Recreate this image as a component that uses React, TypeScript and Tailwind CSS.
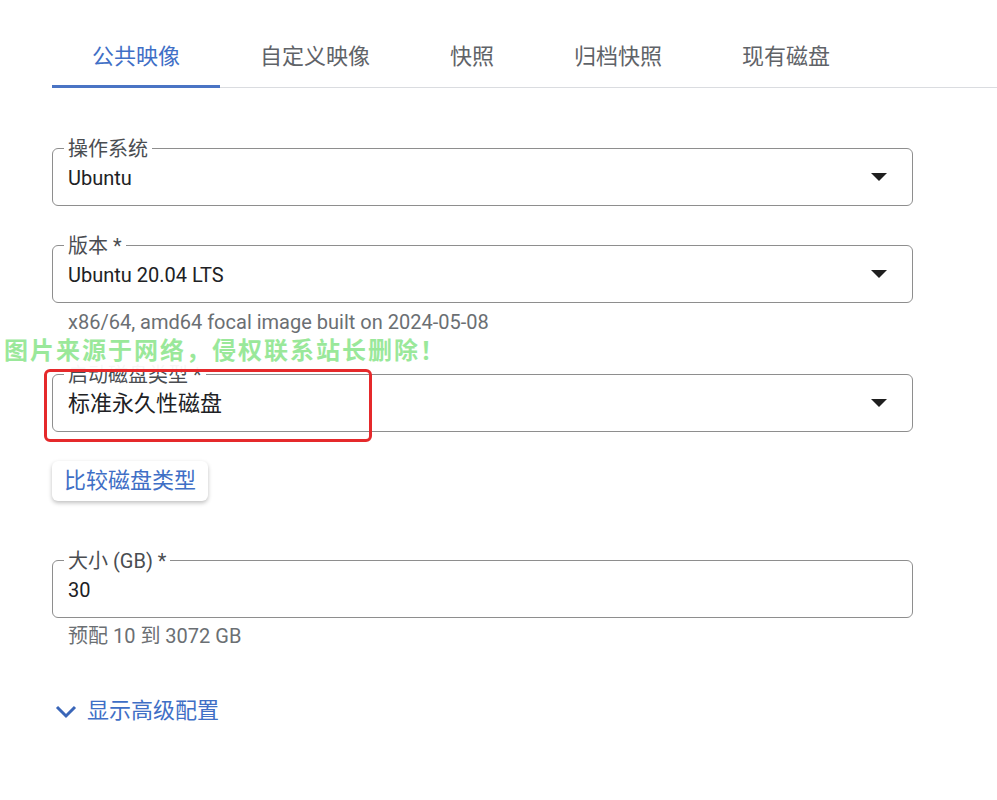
import React from "react";

const Arrow = () => (
  <svg width="16" height="8" viewBox="0 0 16 8" className="shrink-0">
    <path d="M0 0 L16 0 L8 8 Z" fill="#1f1f1f" />
  </svg>
);

function Field({
  label,
  value,
  select,
  big,
  className = "",
}: {
  label: string;
  value: string;
  select?: boolean;
  big?: boolean;
  className?: string;
}) {
  return (
    <div
      className={`relative w-[861px] h-[58px] border border-[#8e8e8e] rounded-[6px] flex items-center justify-between pl-[15px] pr-[25px] ${className}`}
    >
      <span className="absolute left-[11px] top-0 -translate-y-1/2 bg-white px-[4px] text-[20px] leading-[22px] text-[#4a4d51]">
        {label}
      </span>
      <span
        className={`${big ? "text-[22px]" : "text-[20px]"} leading-[26px] text-[#202124] mt-[2px]`}
      >
        {value}
      </span>
      {select && <Arrow />}
    </div>
  );
}

export default function App() {
  const tabs = ["公共映像", "自定义映像", "快照", "归档快照", "现有磁盘"];
  return (
    <div
      className="relative w-[997px] h-[800px] bg-white overflow-hidden"
      style={{ fontFamily: 'Roboto, "Noto Sans CJK SC", sans-serif' }}
    >
      <div className="ml-[52px] flex border-b border-[#dadce0]">
        {tabs.map((t, i) => (
          <div
            key={t}
            className={`px-10 pt-[42px] pb-[13px] text-[22px] leading-[30px] -mb-px border-b-[3px] ${
              i === 0 ? "text-[#3f6fc6] border-[#4a74c4]" : "text-[#5f6368] border-transparent"
            }`}
          >
            {t}
          </div>
        ))}
      </div>

      <div className="ml-[52px] flex flex-col">
        <Field label="操作系统" value="Ubuntu" select className="mt-[60px]" />
        <Field label="版本 *" value="Ubuntu 20.04 LTS" select className="mt-[39px]" />
        <div className="mt-[6px] pl-[16px] text-[20px] leading-[26px] text-[#6b6f73]">
          x86/64, amd64 focal image built on 2024-05-08
        </div>
        <Field label="启动磁盘类型 *" value="标准永久性磁盘" select big className="mt-[39px]" />
        <button className="mt-[29px] self-start h-[40px] px-[12px] rounded-[6px] bg-white text-[22px] leading-[28px] text-[#3f6fc6] shadow-[0_2px_4px_rgba(0,0,0,0.25)]">
          比较磁盘类型
        </button>
        <Field label="大小 (GB) *" value="30" className="mt-[59px]" />
        <div className="mt-[5px] pl-[16px] text-[20px] leading-[26px] text-[#6b6f73]">
          预配 10 到 3072 GB
        </div>
        <div className="mt-[48px] flex items-center gap-[9px] pl-[2px]">
          <svg width="24" height="24" viewBox="0 0 24 24">
            <path d="M3 8 L12 17 L21 8" fill="none" stroke="#3a66b8" strokeWidth="3" />
          </svg>
          <span className="text-[22px] leading-[28px] text-[#3f6fc6]">显示高级配置</span>
        </div>
      </div>

      {/* watermark */}
      <div className="absolute left-[4px] top-[337px] h-[32px] bg-white/95 pr-1 text-[24px] leading-[28px] font-bold tracking-[2px] text-[#9ae89a]">
        图片来源于网络，侵权联系站长删除！
      </div>
      {/* red annotation */}
      <div className="absolute left-[44px] top-[369px] w-[328px] h-[73px] border-[3px] border-[#e5292b] rounded-[6px]" />
    </div>
  );
}
